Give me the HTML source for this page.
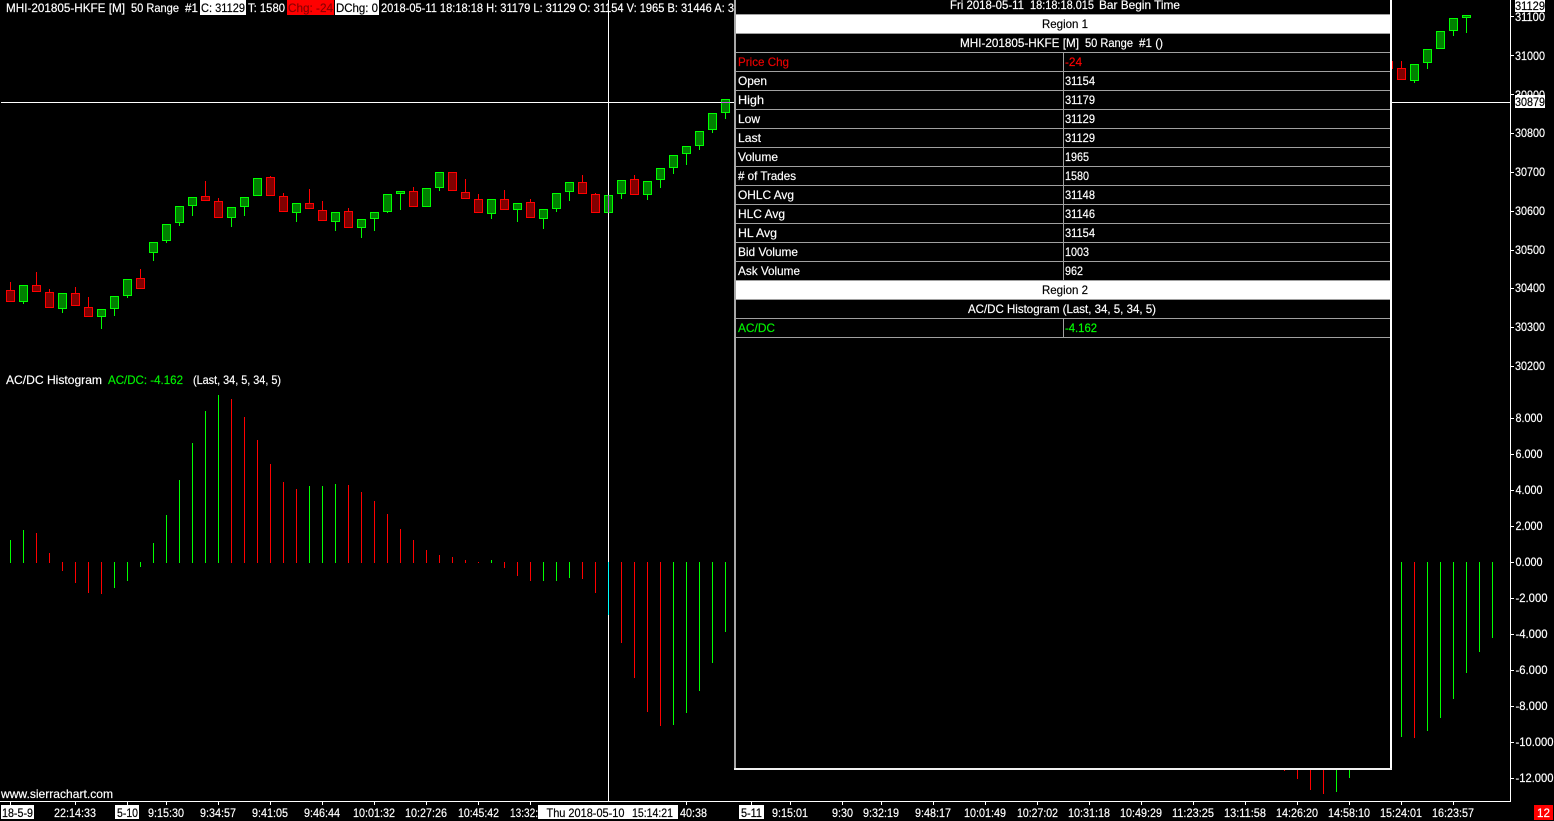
<!DOCTYPE html>
<html><head><meta charset="utf-8"><title>Sierra Chart</title>
<style>
html,body{margin:0;padding:0;background:#000;width:1554px;height:821px;overflow:hidden}
svg{display:block}
text{font-family:"Liberation Sans",sans-serif;font-size:12px;color:#fff;fill:currentColor;stroke:currentColor;stroke-width:.18px;white-space:pre}
.k{color:#000}
.path{shape-rendering:crispEdges}
</style></head><body>
<svg width="1554" height="821" viewBox="0 0 1554 821" xmlns="http://www.w3.org/2000/svg">
<rect width="1554" height="821" fill="#000"/>
<!-- wicks red -->
<path class="path" fill="none" stroke="#f00" d="M10.5 282V290M36.5 272V285M49.5 289V292M75.5 287V293M88.5 297V307M140.5 269V278M205.5 181V196M218.5 198V201M270.5 176V177M283.5 193V196M309.5 189V203M322.5 201V210M348.5 208V211M413.5 187V191M465.5 179V192M478.5 194V199M504.5 190V199M530.5 199V202M582.5 175V182M595.5 193V194M634.5 175V179M1401.5 61V68"/>
<!-- wicks green -->
<path class="path" fill="none" stroke="#0f0" d="M23.5 301V304M62.5 308V313M101.5 316V329M114.5 308V316M127.5 295V298M153.5 252V261M166.5 240V243M179.5 222V226M192.5 205V216M231.5 217V227M244.5 206V216M296.5 212V222M335.5 221V231M361.5 227V238M374.5 218V231M387.5 211V213M400.5 193V210M439.5 187V191M491.5 213V219M517.5 209V222M543.5 218V229M556.5 208V212M569.5 191V201M621.5 193V199M647.5 194V200M660.5 179V188M673.5 167V174M686.5 153V165M699.5 145V150M712.5 129V133M725.5 112V119M1414.5 80V83M1427.5 62V69M1453.5 30V36M1466.5 17V33"/>
<!-- red candles -->
<path class="path" fill="#800000" stroke="#f00" d="M6.5 290.5h8V301.5h-8zM32.5 285.5h8V291.5h-8zM45.5 292.5h8V307.5h-8zM71.5 293.5h8V305.5h-8zM84.5 307.5h8V316.5h-8zM136.5 278.5h8V288.5h-8zM201.5 196.5h8V200.5h-8zM214.5 201.5h8V217.5h-8zM266.5 177.5h8V195.5h-8zM279.5 196.5h8V211.5h-8zM305.5 203.5h8V208.5h-8zM318.5 210.5h8V220.5h-8zM344.5 211.5h8V227.5h-8zM409.5 191.5h8V206.5h-8zM448.5 172.5h8V190.5h-8zM461.5 192.5h8V198.5h-8zM474.5 199.5h8V212.5h-8zM500.5 199.5h8V209.5h-8zM526.5 202.5h8V217.5h-8zM578.5 182.5h8V193.5h-8zM591.5 194.5h8V212.5h-8zM630.5 179.5h8V194.5h-8zM1384.5 61.5h8V68.5h-8zM1397.5 68.5h8V79.5h-8z"/>
<!-- green candles -->
<path class="path" fill="#008000" stroke="#0f0" d="M19.5 285.5h8V301.5h-8zM58.5 293.5h8V308.5h-8zM97.5 309.5h8V316.5h-8zM110.5 296.5h8V308.5h-8zM123.5 279.5h8V295.5h-8zM149.5 242.5h8V252.5h-8zM162.5 224.5h8V240.5h-8zM175.5 206.5h8V222.5h-8zM188.5 197.5h8V205.5h-8zM227.5 207.5h8V217.5h-8zM240.5 197.5h8V206.5h-8zM253.5 178.5h8V195.5h-8zM292.5 203.5h8V212.5h-8zM331.5 212.5h8V221.5h-8zM357.5 219.5h8V227.5h-8zM370.5 212.5h8V218.5h-8zM383.5 194.5h8V211.5h-8zM396.5 191.5h8V193.5h-8zM422.5 188.5h8V206.5h-8zM435.5 172.5h8V187.5h-8zM487.5 199.5h8V213.5h-8zM513.5 203.5h8V209.5h-8zM539.5 209.5h8V218.5h-8zM552.5 193.5h8V208.5h-8zM565.5 182.5h8V191.5h-8zM604.5 195.5h8V212.5h-8zM617.5 180.5h8V193.5h-8zM643.5 181.5h8V194.5h-8zM656.5 168.5h8V179.5h-8zM669.5 155.5h8V167.5h-8zM682.5 146.5h8V153.5h-8zM695.5 131.5h8V145.5h-8zM708.5 113.5h8V129.5h-8zM721.5 99.5h8V112.5h-8zM1410.5 64.5h8V80.5h-8zM1423.5 49.5h8V62.5h-8zM1436.5 31.5h8V48.5h-8zM1449.5 18.5h8V30.5h-8zM1462.5 15.5h8V17.5h-8z"/>
<!-- histogram -->
<path class="path" fill="none" stroke="#f00" d="M36.5 533V563M49.5 553V563M62.5 562V571M75.5 562V583M88.5 562V593M101.5 562V594M231.5 399V563M244.5 417V563M257.5 440V563M270.5 464V563M283.5 482V563M296.5 489V563M348.5 485V563M361.5 492V563M374.5 501V563M387.5 514V563M400.5 529V563M413.5 540V563M426.5 550V563M439.5 555V563M452.5 557V563M465.5 560V563M478.5 562V563M504.5 562V568M517.5 562V576M530.5 562V581M582.5 562V579M595.5 562V593M621.5 562V643M634.5 562V678M647.5 562V712M660.5 562V726M1414.5 562V738M1284.5 562V771M1297.5 562V779M1310.5 562V790M1323.5 562V794"/>
<path class="path" fill="none" stroke="#0f0" d="M10.5 540V563M23.5 530V563M114.5 562V588M127.5 562V581M140.5 562V567M153.5 543V563M166.5 515V563M179.5 480V563M192.5 443V563M205.5 411V563M218.5 395V563M309.5 486V563M322.5 486V563M335.5 484V563M491.5 560V563M543.5 562V581M556.5 562V581M569.5 562V578M673.5 562V725M686.5 562V713M699.5 562V691M712.5 562V663M725.5 562V632M1401.5 562V737M1427.5 562V731M1440.5 562V718M1453.5 562V699M1466.5 562V673M1479.5 562V652M1492.5 562V638M1336.5 562V792M1349.5 562V778"/>
<!-- crosshair -->
<path class="path" fill="none" stroke="#fff" d="M1 102.5H1510M608.5 0V195M608.5 213V562M608.5 615V801"/>
<path class="path" fill="none" stroke="#0ff" d="M608.5 562V615"/>
<path class="path" fill="none" stroke="#c060e0" d="M608.5 195V213M721 102.5H730"/>
<!-- axes -->
<path class="path" fill="none" stroke="#fff" d="M1510.5 0V801.5H0M1511 16.5h3M1511 55.5h3M1511 94.5h3M1511 133.5h3M1511 172.5h3M1511 211.5h3M1511 250.5h3M1511 288.5h3M1511 327.5h3M1511 366.5h3M1511 418.5h3M1511 454.5h3M1511 490.5h3M1511 526.5h3M1511 562.5h3M1511 598.5h3M1511 634.5h3M1511 670.5h3M1511 706.5h3M1511 742.5h3M1511 778.5h3M10.5 802v3M75.5 802v3M127.5 802v3M166.5 802v3M218.5 802v3M270.5 802v3M322.5 802v3M374.5 802v3M426.5 802v3M478.5 802v3M530.5 802v3M686.5 802v3M751.5 802v3M790.5 802v3M842.5 802v3M881.5 802v3M933.5 802v3M985.5 802v3M1037.5 802v3M1089.5 802v3M1141.5 802v3M1193.5 802v3M1245.5 802v3M1297.5 802v3M1349.5 802v3M1401.5 802v3M1453.5 802v3"/>
<!-- top status -->
<text x="6" y="12" textLength="119" lengthAdjust="spacingAndGlyphs">MHI-201805-HKFE [M]</text>
<text x="131" y="12" textLength="48" lengthAdjust="spacingAndGlyphs">50 Range</text>
<text x="185" y="12" textLength="13" lengthAdjust="spacingAndGlyphs">#1</text>
<rect x="200" y="0" width="46" height="15" fill="#fff"/>
<text class="k" x="201" y="12" textLength="44" lengthAdjust="spacingAndGlyphs">C: 31129</text>
<text x="248" y="12" textLength="37" lengthAdjust="spacingAndGlyphs">T: 1580</text>
<rect x="287" y="0" width="47" height="15" fill="#f00"/>
<text x="288" y="12" textLength="45" lengthAdjust="spacingAndGlyphs" style="color:#8a0000">Chg: -24</text>
<rect x="335" y="0" width="44" height="15" fill="#fff"/>
<text class="k" x="336" y="12" textLength="42" lengthAdjust="spacingAndGlyphs">DChg: 0</text>
<text x="381" y="12" textLength="353" lengthAdjust="spacingAndGlyphs">2018-05-11 18:18:18 H: 31179 L: 31129 O: 31154 V: 1965 B: 31446 A: 3</text>
<!-- study label -->
<text x="6" y="384" textLength="96" lengthAdjust="spacingAndGlyphs">AC/DC Histogram</text>
<text x="108" y="384" textLength="75" lengthAdjust="spacingAndGlyphs" style="color:#00f000">AC/DC: -4.162</text>
<text x="193" y="384" textLength="88" lengthAdjust="spacingAndGlyphs">(Last, 34, 5, 34, 5)</text>
<text x="1" y="798" textLength="112" lengthAdjust="spacingAndGlyphs">www.sierrachart.com</text>
<!-- panel -->
<rect x="734" y="0" width="658" height="770" fill="#000"/>
<rect x="734" y="0" width="2" height="770" fill="#a8a8a8"/>
<rect x="1390" y="0" width="2" height="770" fill="#fff"/>
<rect x="734" y="768" width="658" height="2" fill="#f0f0f0"/>
<rect x="736" y="15" width="654" height="18" fill="#fff"/>
<rect x="736" y="281" width="654" height="18" fill="#fff"/>
<path class="path" fill="none" stroke="#a0a0a0" d="M736 14.5H1390M736 33.5H1390M736 52.5H1390M736 71.5H1390M736 90.5H1390M736 109.5H1390M736 128.5H1390M736 147.5H1390M736 166.5H1390M736 185.5H1390M736 204.5H1390M736 223.5H1390M736 242.5H1390M736 261.5H1390M736 280.5H1390M736 299.5H1390M736 318.5H1390M736 337.5H1390M1063.5 53V280M1063.5 319V337"/>
<text x="950" y="9" textLength="74" lengthAdjust="spacingAndGlyphs">Fri 2018-05-11</text>
<text x="1030" y="9" textLength="64" lengthAdjust="spacingAndGlyphs">18:18:18.015</text>
<text x="1099" y="9" textLength="81" lengthAdjust="spacingAndGlyphs">Bar Begin Time</text>
<text class="k" x="1042" y="28" textLength="46" lengthAdjust="spacingAndGlyphs">Region 1</text>
<text x="960" y="47" textLength="119" lengthAdjust="spacingAndGlyphs">MHI-201805-HKFE [M]</text>
<text x="1085" y="47" textLength="48" lengthAdjust="spacingAndGlyphs">50 Range</text>
<text x="1139" y="47" textLength="24" lengthAdjust="spacingAndGlyphs">#1 ()</text>
<text x="738" y="66" textLength="51" lengthAdjust="spacingAndGlyphs" style="color:#e80000">Price Chg</text>
<text x="1065" y="66" textLength="17" lengthAdjust="spacingAndGlyphs" style="color:#f00">-24</text>
<text x="738" y="85" textLength="29" lengthAdjust="spacingAndGlyphs">Open</text>
<text x="1065" y="85" textLength="30" lengthAdjust="spacingAndGlyphs">31154</text>
<text x="738" y="104" textLength="26" lengthAdjust="spacingAndGlyphs">High</text>
<text x="1065" y="104" textLength="30" lengthAdjust="spacingAndGlyphs">31179</text>
<text x="738" y="123" textLength="22" lengthAdjust="spacingAndGlyphs">Low</text>
<text x="1065" y="123" textLength="30" lengthAdjust="spacingAndGlyphs">31129</text>
<text x="738" y="142" textLength="23" lengthAdjust="spacingAndGlyphs">Last</text>
<text x="1065" y="142" textLength="30" lengthAdjust="spacingAndGlyphs">31129</text>
<text x="738" y="161" textLength="40" lengthAdjust="spacingAndGlyphs">Volume</text>
<text x="1065" y="161" textLength="24" lengthAdjust="spacingAndGlyphs">1965</text>
<text x="738" y="180" textLength="58" lengthAdjust="spacingAndGlyphs"># of Trades</text>
<text x="1065" y="180" textLength="24" lengthAdjust="spacingAndGlyphs">1580</text>
<text x="738" y="199" textLength="56" lengthAdjust="spacingAndGlyphs">OHLC Avg</text>
<text x="1065" y="199" textLength="30" lengthAdjust="spacingAndGlyphs">31148</text>
<text x="738" y="218" textLength="47" lengthAdjust="spacingAndGlyphs">HLC Avg</text>
<text x="1065" y="218" textLength="30" lengthAdjust="spacingAndGlyphs">31146</text>
<text x="738" y="237" textLength="39" lengthAdjust="spacingAndGlyphs">HL Avg</text>
<text x="1065" y="237" textLength="30" lengthAdjust="spacingAndGlyphs">31154</text>
<text x="738" y="256" textLength="60" lengthAdjust="spacingAndGlyphs">Bid Volume</text>
<text x="1065" y="256" textLength="24" lengthAdjust="spacingAndGlyphs">1003</text>
<text x="738" y="275" textLength="62" lengthAdjust="spacingAndGlyphs">Ask Volume</text>
<text x="1065" y="275" textLength="18" lengthAdjust="spacingAndGlyphs">962</text>
<text class="k" x="1042" y="294" textLength="46" lengthAdjust="spacingAndGlyphs">Region 2</text>
<text x="968" y="313" textLength="188" lengthAdjust="spacingAndGlyphs">AC/DC Histogram (Last, 34, 5, 34, 5)</text>
<text x="738" y="332" textLength="37" lengthAdjust="spacingAndGlyphs" style="color:#00f000">AC/DC</text>
<text x="1065" y="332" textLength="32" lengthAdjust="spacingAndGlyphs" style="color:#0f0">-4.162</text>
<!-- price axis -->
<text x="1515" y="21" textLength="30" lengthAdjust="spacingAndGlyphs">31100</text>
<rect x="1515" y="0" width="30" height="12" fill="#fff"/>
<text class="k" x="1515" y="10" textLength="30" lengthAdjust="spacingAndGlyphs">31129</text>
<text x="1515" y="60" textLength="30" lengthAdjust="spacingAndGlyphs">31000</text>
<text x="1515" y="99" textLength="30" lengthAdjust="spacingAndGlyphs">30900</text>
<rect x="1515" y="95" width="30" height="13" fill="#fff"/>
<text class="k" x="1515" y="106" textLength="30" lengthAdjust="spacingAndGlyphs">30879</text>
<text x="1515" y="137" textLength="30" lengthAdjust="spacingAndGlyphs">30800</text>
<text x="1515" y="176" textLength="30" lengthAdjust="spacingAndGlyphs">30700</text>
<text x="1515" y="215" textLength="30" lengthAdjust="spacingAndGlyphs">30600</text>
<text x="1515" y="254" textLength="30" lengthAdjust="spacingAndGlyphs">30500</text>
<text x="1515" y="292" textLength="30" lengthAdjust="spacingAndGlyphs">30400</text>
<text x="1515" y="331" textLength="30" lengthAdjust="spacingAndGlyphs">30300</text>
<text x="1515" y="370" textLength="30" lengthAdjust="spacingAndGlyphs">30200</text>
<text x="1515.5" y="422" textLength="27" lengthAdjust="spacingAndGlyphs">8.000</text>
<text x="1515.5" y="458" textLength="27" lengthAdjust="spacingAndGlyphs">6.000</text>
<text x="1515.5" y="494" textLength="27" lengthAdjust="spacingAndGlyphs">4.000</text>
<text x="1515.5" y="530" textLength="27" lengthAdjust="spacingAndGlyphs">2.000</text>
<text x="1515.5" y="566" textLength="27" lengthAdjust="spacingAndGlyphs">0.000</text>
<text x="1515.5" y="602" textLength="32" lengthAdjust="spacingAndGlyphs">-2.000</text>
<text x="1515.5" y="638" textLength="32" lengthAdjust="spacingAndGlyphs">-4.000</text>
<text x="1515.5" y="674" textLength="32" lengthAdjust="spacingAndGlyphs">-6.000</text>
<text x="1515.5" y="710" textLength="32" lengthAdjust="spacingAndGlyphs">-8.000</text>
<text x="1515.5" y="746" textLength="38" lengthAdjust="spacingAndGlyphs">-10.000</text>
<text x="1515.5" y="782" textLength="38" lengthAdjust="spacingAndGlyphs">-12.000</text>
<!-- time axis -->
<rect x="1" y="805" width="33" height="14" fill="#fff"/>
<text class="k" x="2" y="817" textLength="31" lengthAdjust="spacingAndGlyphs">18-5-9</text>
<text x="54" y="817" textLength="42" lengthAdjust="spacingAndGlyphs">22:14:33</text>
<rect x="115" y="805" width="24" height="14" fill="#fff"/>
<text class="k" x="117" y="817" textLength="21" lengthAdjust="spacingAndGlyphs">5-10</text>
<text x="148" y="817" textLength="36" lengthAdjust="spacingAndGlyphs">9:15:30</text>
<text x="200" y="817" textLength="36" lengthAdjust="spacingAndGlyphs">9:34:57</text>
<text x="252" y="817" textLength="36" lengthAdjust="spacingAndGlyphs">9:41:05</text>
<text x="304" y="817" textLength="36" lengthAdjust="spacingAndGlyphs">9:46:44</text>
<text x="353" y="817" textLength="42" lengthAdjust="spacingAndGlyphs">10:01:32</text>
<text x="405" y="817" textLength="42" lengthAdjust="spacingAndGlyphs">10:27:26</text>
<text x="458" y="817" textLength="41" lengthAdjust="spacingAndGlyphs">10:45:42</text>
<text x="510" y="817" textLength="28" lengthAdjust="spacingAndGlyphs">13:32:</text>
<rect x="538" y="805" width="140" height="14" fill="#fff"/>
<text class="k" x="546.5" y="817" textLength="78" lengthAdjust="spacingAndGlyphs">Thu 2018-05-10</text>
<text class="k" x="632" y="817" textLength="41" lengthAdjust="spacingAndGlyphs">15:14:21</text>
<text x="680" y="817" textLength="27" lengthAdjust="spacingAndGlyphs">40:38</text>
<rect x="739" y="805" width="25" height="14" fill="#fff"/>
<text class="k" x="741" y="817" textLength="21" lengthAdjust="spacingAndGlyphs">5-11</text>
<text x="772" y="817" textLength="36" lengthAdjust="spacingAndGlyphs">9:15:01</text>
<text x="832" y="817" textLength="21" lengthAdjust="spacingAndGlyphs">9:30</text>
<text x="863" y="817" textLength="36" lengthAdjust="spacingAndGlyphs">9:32:19</text>
<text x="915" y="817" textLength="36" lengthAdjust="spacingAndGlyphs">9:48:17</text>
<text x="964" y="817" textLength="42" lengthAdjust="spacingAndGlyphs">10:01:49</text>
<text x="1017" y="817" textLength="41" lengthAdjust="spacingAndGlyphs">10:27:02</text>
<text x="1068" y="817" textLength="42" lengthAdjust="spacingAndGlyphs">10:31:18</text>
<text x="1120" y="817" textLength="42" lengthAdjust="spacingAndGlyphs">10:49:29</text>
<text x="1172" y="817" textLength="42" lengthAdjust="spacingAndGlyphs">11:23:25</text>
<text x="1224" y="817" textLength="42" lengthAdjust="spacingAndGlyphs">13:11:58</text>
<text x="1276" y="817" textLength="42" lengthAdjust="spacingAndGlyphs">14:26:20</text>
<text x="1328" y="817" textLength="42" lengthAdjust="spacingAndGlyphs">14:58:10</text>
<text x="1380" y="817" textLength="42" lengthAdjust="spacingAndGlyphs">15:24:01</text>
<text x="1432" y="817" textLength="42" lengthAdjust="spacingAndGlyphs">16:23:57</text>
<rect x="1534" y="805" width="19" height="15" fill="#f00"/>
<text x="1537" y="817" textLength="13" lengthAdjust="spacingAndGlyphs">12</text>
</svg>
</body></html>
